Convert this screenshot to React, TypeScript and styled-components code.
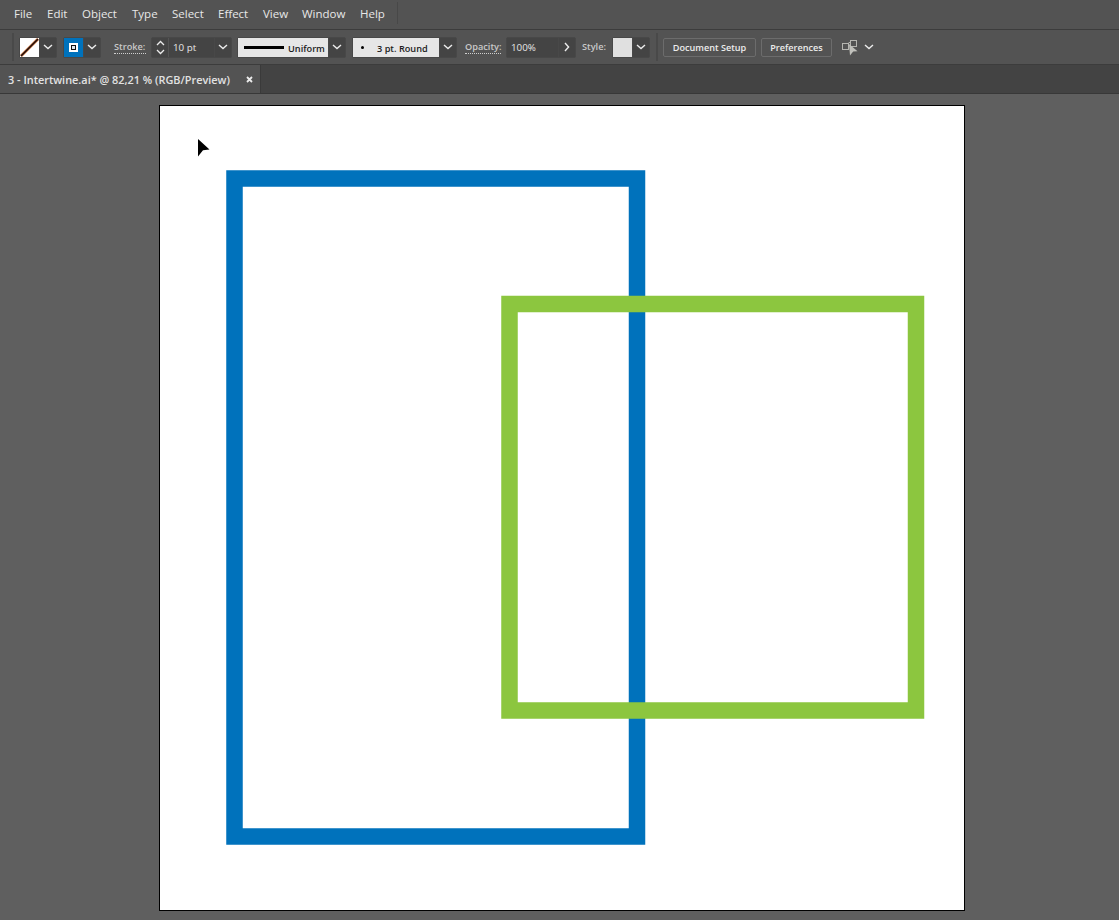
import styled, { createGlobalStyle } from "styled-components";

const GlobalStyle = createGlobalStyle`
  html, body {
    margin: 0;
    padding: 0;
    background: #5f5f5f;
  }
`;

const Page = styled.div`
  width: 1119px;
  height: 920px;
  overflow: hidden;
  display: flex;
  flex-direction: column;
  background: #5f5f5f;
  font-family: "Open Sans", "Noto Sans", sans-serif;
  color: #e6e6e6;
`;

const MenuBar = styled.div`
  height: 30px;
  box-sizing: border-box;
  flex: none;
  display: flex;
  align-items: center;
  padding: 0 0 3px 14px;
  background: #535353;
  border-bottom: 1px solid #3c3c3c;
`;

const MenuItem = styled.span<{ $w: number }>`
  width: ${(p) => p.$w}px;
  font-size: 11.5px;
  color: #e8e8e8;
  white-space: nowrap;
`;

const MenuDivider = styled.div`
  width: 1px;
  height: 22px;
  margin-left: -4px;
  background: #484848;
`;

const ControlBar = styled.div`
  height: 35px;
  box-sizing: border-box;
  flex: none;
  display: flex;
  align-items: center;
  padding: 0 0 0 12px;
  background: #535353;
  border-bottom: 1px solid #3c3c3c;
`;

const Grip = styled.div<{ $ml?: number; $mr: number }>`
  width: 2px;
  height: 28px;
  margin-left: ${(p) => p.$ml ?? 0}px;
  margin-right: ${(p) => p.$mr}px;
  background: #494949;
`;

const Group = styled.div<{ $ml?: number }>`
  height: 19px;
  display: flex;
  align-items: stretch;
  margin-left: ${(p) => p.$ml ?? 0}px;
  border: 1px solid #484848;
  background: #444444;
  border-radius: 2px;
  box-sizing: content-box;
`;

const Swatch = styled.div`
  width: 19px;
  background: #ffffff;
  display: flex;
`;

const StrokeSwatch = styled.div`
  width: 19px;
  background: #0072bc;
  display: flex;
  align-items: center;
  justify-content: center;
`;

const StyleSwatch = styled.div`
  width: 19px;
  background: #e0e0e0;
`;

const Caret = styled.button`
  width: 17px;
  padding: 0;
  border: none;
  border-left: 1px solid #484848;
  background: #444444;
  color: #e6e6e6;
  display: flex;
  align-items: center;
  justify-content: center;
`;

const Stepper = styled.div`
  width: 17px;
  display: flex;
  flex-direction: column;
  align-items: center;
  justify-content: center;
  gap: 3px;
  border-right: 1px solid #545454;
  box-sizing: border-box;
`;

const ValueBox = styled.div<{ $w: number }>`
  width: ${(p) => p.$w}px;
  box-sizing: border-box;
  padding-left: 4px;
  font-size: 9.8px;
  line-height: 19px;
  color: #e6e6e6;
`;

const Label = styled.span<{ $ml: number; $w: number; $dotted?: boolean }>`
  width: ${(p) => p.$w}px;
  flex: none;
  margin-left: ${(p) => p.$ml}px;
  font-size: 9.2px;
  font-weight: 600;
  color: #c9c9c9;
  line-height: 12px;
  white-space: nowrap;
  border-bottom: ${(p) => (p.$dotted ? "1px dotted #cfcfcf" : "none")};
`;

const LightField = styled.div<{ $w: number }>`
  width: ${(p) => p.$w}px;
  background: #e6e6e6;
  color: #1c1c1c;
  display: flex;
  align-items: center;
  padding-top: 2px;
  box-sizing: border-box;
  font-size: 9.2px;
  font-weight: 600;
`;

const StrokeLine = styled.div`
  width: 40px;
  height: 3px;
  margin: -2px 4px 0 6px;
  background: #000000;
`;

const Dot = styled.div`
  width: 3px;
  height: 3px;
  margin: -2px 13px 0 8px;
  border-radius: 50%;
  background: #000000;
`;

const BarButton = styled.button<{ $w: number; $ml: number }>`
  width: ${(p) => p.$w}px;
  height: 19px;
  margin-left: ${(p) => p.$ml}px;
  padding: 1px 0 0;
  box-sizing: border-box;
  background: #535353;
  border: 1px solid #6c6c6c;
  border-radius: 2px;
  font-family: inherit;
  font-size: 9.1px;
  font-weight: 600;
  color: #ececec;
  white-space: nowrap;
`;

const IconSlot = styled.div`
  margin-left: 10px;
  display: flex;
  align-items: center;
  gap: 5px;
`;

const TabBar = styled.div`
  height: 29px;
  box-sizing: border-box;
  flex: none;
  display: flex;
  background: #434343;
  border-bottom: 1px solid #383838;
`;

const Tab = styled.div`
  width: 261px;
  box-sizing: border-box;
  display: flex;
  align-items: center;
  justify-content: space-between;
  padding: 0 7px 0 8px;
  background: #535353;
  border-right: 1px solid #3a3a3a;
  font-size: 10.9px;
  font-weight: 600;
  color: #e2e2e2;
  white-space: nowrap;
`;

const Canvas = styled.main`
  flex: 1;
  padding: 11px 0 0 159px;
`;

const Artboard = styled.div`
  position: relative;
  width: 806px;
  height: 806px;
  box-sizing: border-box;
  background: #ffffff;
  border: 1px solid #000000;
`;

// artwork sits on the artboard, so its place is the content
const Art = styled.svg`
  position: absolute;
  left: -1px;
  top: -1px;
  width: 806px;
  height: 806px;
`;

const Chevron = ({ dir = "down" }: { dir?: "down" | "right" }) =>
  dir === "down" ? (
    <svg width="10" height="6" viewBox="0 0 10 6" fill="none">
      <path d="M1 1l4 3.6L9 1" stroke="#ececec" strokeWidth="1.4" />
    </svg>
  ) : (
    <svg width="6" height="10" viewBox="0 0 6 10" fill="none">
      <path d="M1 1l3.6 4L1 9" stroke="#ececec" strokeWidth="1.4" />
    </svg>
  );

const menus: [string, number][] = [
  ["File", 33],
  ["Edit", 35],
  ["Object", 50],
  ["Type", 40],
  ["Select", 46],
  ["Effect", 45],
  ["View", 39],
  ["Window", 58],
  ["Help", 41],
];

export default function App() {
  return (
    <Page>
      <GlobalStyle />
      <MenuBar>
        {menus.map(([name, w]) => (
          <MenuItem key={name} $w={w}>
            {name}
          </MenuItem>
        ))}
        <MenuDivider />
      </MenuBar>

      <ControlBar>
        <Grip $mr={5} />
        <Group>
          <Swatch>
            <svg width="19" height="19" viewBox="0 0 19 19">
              <path d="M1 18L18 1" stroke="#c0622a" strokeWidth="2.6" />
              <path d="M1 18L18 1" stroke="#1d1010" strokeWidth="1.5" />
            </svg>
          </Swatch>
          <Caret>
            <Chevron />
          </Caret>
        </Group>
        <Group $ml={6}>
          <StrokeSwatch>
            <svg width="9" height="9" viewBox="0 0 9 9">
              <rect width="9" height="9" fill="#ffffff" />
              <rect x="2.5" y="2.5" width="4" height="4" fill="#dfe9f0" stroke="#111111" />
            </svg>
          </StrokeSwatch>
          <Caret>
            <Chevron />
          </Caret>
        </Group>
        <Label $ml={13} $w={32} $dotted>
          Stroke:
        </Label>
        <Group $ml={5}>
          <Stepper>
            <svg width="9" height="6" viewBox="0 0 9 6" fill="none">
              <path d="M1 5l3.5-3.5L8 5" stroke="#ececec" strokeWidth="1.3" />
            </svg>
            <svg width="9" height="6" viewBox="0 0 9 6" fill="none">
              <path d="M1 1l3.5 3.5L8 1" stroke="#ececec" strokeWidth="1.3" />
            </svg>
          </Stepper>
          <ValueBox $w={45}>10 pt</ValueBox>
          <Caret>
            <Chevron />
          </Caret>
        </Group>
        <Group $ml={5}>
          <LightField $w={90}>
            <StrokeLine />
            Uniform
          </LightField>
          <Caret>
            <Chevron />
          </Caret>
        </Group>
        <Group $ml={6}>
          <LightField $w={86}>
            <Dot />
            3 pt. Round
          </LightField>
          <Caret>
            <Chevron />
          </Caret>
        </Group>
        <Label $ml={8} $w={36} $dotted>
          Opacity:
        </Label>
        <Group $ml={5}>
          <ValueBox $w={51}>100%</ValueBox>
          <Caret>
            <Chevron dir="right" />
          </Caret>
        </Group>
        <Label $ml={6} $w={25}>
          Style:
        </Label>
        <Group $ml={5}>
          <StyleSwatch />
          <Caret>
            <Chevron />
          </Caret>
        </Group>
        <Grip $ml={6} $mr={5} />
        <BarButton $w={93} $ml={0}>
          Document Setup
        </BarButton>
        <BarButton $w={71} $ml={5}>
          Preferences
        </BarButton>
        <IconSlot>
          <svg width="17" height="17" viewBox="0 0 17 17" fill="none">
            <rect x="0.5" y="4.5" width="6" height="6" stroke="#b5b5b0" />
            <rect x="8.5" y="1.5" width="6" height="6" stroke="#b5b5b0" />
            <path d="M6 4.5l3-2" stroke="#b5b5b0" />
            <path d="M7 5L15.5 12.2L11.2 12.6L8 16.5z" fill="#c0c0bb" />
          </svg>
          <Chevron />
        </IconSlot>
      </ControlBar>

      <TabBar>
        <Tab>
          3 - Intertwine.ai* @ 82,21 % (RGB/Preview)
          <svg width="7" height="7" viewBox="0 0 7 7">
            <path d="M1 1l5 5M6 1L1 6" stroke="#ececec" strokeWidth="1.8" />
          </svg>
        </Tab>
      </TabBar>

      <Canvas>
        <Artboard>
          <Art viewBox="0 0 806 806">
            <rect x="75.5" y="73.5" width="402.5" height="658" fill="none" stroke="#0072bc" strokeWidth="16.5" />
            <rect x="350.5" y="199" width="406.5" height="406.5" fill="none" stroke="#8cc63f" strokeWidth="16.5" />
            <path d="M39 34L50.5 44.5L44 45.3L39 51.5z" fill="#000000" />
          </Art>
        </Artboard>
      </Canvas>
    </Page>
  );
}
